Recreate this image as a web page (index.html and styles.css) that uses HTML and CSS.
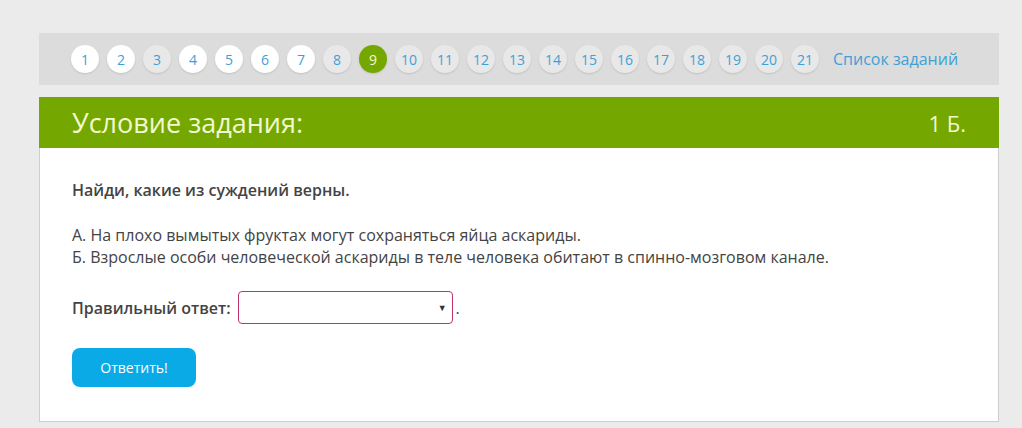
FILE: index.html
```html
<!DOCTYPE html>
<html lang="ru">

<head>
    <meta charset="UTF-8">
    <meta name="viewport" content="width=device-width, initial-scale=1.0">
    <title>Условие задания</title>
    <link rel="stylesheet" href="styles.css">
</head>

<body>
    <div class="page">
        <div class="tasks">
            <a class="num done">1</a>
            <a class="num done">2</a>
            <a class="num">3</a>
            <a class="num done">4</a>
            <a class="num done">5</a>
            <a class="num done">6</a>
            <a class="num done">7</a>
            <a class="num">8</a>
            <a class="num current">9</a>
            <a class="num">10</a>
            <a class="num">11</a>
            <a class="num">12</a>
            <a class="num">13</a>
            <a class="num">14</a>
            <a class="num">15</a>
            <a class="num">16</a>
            <a class="num">17</a>
            <a class="num">18</a>
            <a class="num">19</a>
            <a class="num">20</a>
            <a class="num">21</a>
            <a class="list-link">Список заданий</a>
        </div>

        <div class="task">
            <div class="task-head">
                <h2>Условие задания:</h2>
                <span class="points">1 Б.</span>
            </div>

            <div class="task-body">
                <p class="question">Найди, какие из суждений верны.</p>

                <p class="claims">
                    А. На плохо вымытых фруктах могут сохраняться яйца аскариды.<br>
                    Б. Взрослые особи человеческой аскариды в теле человека обитают в спинно-мозговом канале.
                </p>

                <div class="answer">
                    <span class="label">Правильный ответ:</span>
                    <div class="select"><span class="arrow">▼</span></div>
                    <span class="dot">.</span>
                </div>

                <button class="submit">Ответить!</button>
            </div>
        </div>
    </div>
</body>

</html>
```

FILE: styles.css
```css
* {
    margin: 0;
    padding: 0;
    box-sizing: border-box;
}

body {
    background-color: #ebebeb;
    font-family: "Open Sans", "Liberation Sans", sans-serif;
    color: #444;
}

.page {
    width: 960px;
    margin-left: 39px;
    padding-top: 33px;
}

.tasks {
    background: #dcdcdc;
    height: 52px;
    display: flex;
    align-items: center;
    gap: 8px;
    padding-left: 32px;
}

.num {
    width: 28px;
    height: 28px;
    border-radius: 50%;
    background: #e8e8e8;
    color: #3fa0d6;
    font-size: 14px;
    display: flex;
    align-items: center;
    justify-content: center;
    box-shadow: 0 1px 2px rgba(0, 0, 0, 0.12);
}

.num.done {
    background: #fff;
}

.num.current {
    background: #74a800;
    color: #f4fad2;
}

.list-link {
    color: #3fa0d6;
    font-size: 16px;
    margin-left: 6px;
}

.task {
    margin-top: 12px;
    background: #fff;
    border: 1px solid #cfcfcf;
    border-top: 0;
}

.task-head {
    background: #74a800;
    height: 51px;
    margin: 0 -1px;
    padding: 0 33px;
    display: flex;
    align-items: center;
    justify-content: space-between;
    color: #f2f9d2;
}

.task-head h2 {
    font-size: 27px;
    font-weight: 400;
}

.points {
    font-size: 22px;
}

.task-body {
    padding: 31px 32px 34px;
    font-size: 16px;
    line-height: 22px;
}

.question {
    font-weight: 600;
}

.claims {
    margin-top: 23px;
}

.answer {
    margin-top: 23px;
    display: flex;
    align-items: center;
}

.label {
    font-weight: 600;
    margin-right: 7px;
}

.select {
    width: 215px;
    height: 33px;
    border: 1px solid #c2326e;
    border-radius: 4px;
    background: #fff;
    display: flex;
    align-items: center;
    justify-content: flex-end;
    padding-right: 5px;
}

.arrow {
    font-size: 9px;
    color: #333;
}

.dot {
    margin-left: 3px;
}

.submit {
    margin-top: 24px;
    width: 124px;
    height: 39px;
    border: 0;
    border-radius: 8px;
    background: #0aaae6;
    color: #fff;
    font-family: "Open Sans", "Liberation Sans", sans-serif;
    font-size: 14px;
}
```
